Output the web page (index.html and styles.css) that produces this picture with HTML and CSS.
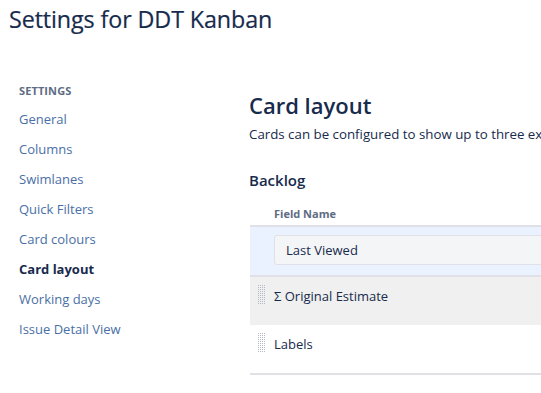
FILE: index.html
```html
<!DOCTYPE html>
<html>
<head>
<meta charset="utf-8">
<link rel="stylesheet" href="styles.css">
</head>
<body>
<header class="page-header">
  <h1 class="page-title">Settings for DDT Kanban</h1>
</header>
<div class="layout">
  <nav class="sidebar">
    <div class="nav-heading">SETTINGS</div>
    <ul class="nav-list">
      <li><a class="nav-link">General</a></li>
      <li><a class="nav-link">Columns</a></li>
      <li><a class="nav-link">Swimlanes</a></li>
      <li><a class="nav-link">Quick Filters</a></li>
      <li><a class="nav-link">Card colours</a></li>
      <li><a class="nav-link active">Card layout</a></li>
      <li><a class="nav-link">Working days</a></li>
      <li><a class="nav-link">Issue Detail View</a></li>
    </ul>
  </nav>
  <main class="content">
    <h2 class="section-title">Card layout</h2>
    <p class="section-desc">Cards can be configured to show up to three extra fields.</p>
    <h3 class="sub-title">Backlog</h3>
    <div class="table">
      <div class="table-head">Field Name</div>
      <div class="row row-add">
        <div class="field-input">Last Viewed</div>
      </div>
      <div class="row row-hover">
        <svg class="grip" width="7" height="20" viewBox="0 0 7 20">
          <defs><pattern id="dots1" width="2" height="2" patternUnits="userSpaceOnUse"><rect width="1" height="1" fill="#b3b9c4"/></pattern></defs>
          <rect width="7" height="20" fill="url(#dots1)"/>
        </svg>
        <span class="row-text">Σ Original Estimate</span>
      </div>
      <div class="row row-last">
        <svg class="grip" width="7" height="20" viewBox="0 0 7 20">
          <defs><pattern id="dots2" width="2" height="2" patternUnits="userSpaceOnUse"><rect width="1" height="1" fill="#b3b9c4"/></pattern></defs>
          <rect width="7" height="20" fill="url(#dots2)"/>
        </svg>
        <span class="row-text">Labels</span>
      </div>
    </div>
  </main>
</div>
</body>
</html>
```
FILE: styles.css
```css
* { box-sizing: border-box; }
html, body { margin: 0; padding: 0; background: #fff; }
body {
  font-family: "Open Sans", "Noto Sans", sans-serif;
  color: #172b4d;
  width: 541px;
  height: 393px;
  overflow: hidden;
}
.page-header { padding: 3px 0 0 9px; height: 70px; }
.page-title {
  margin: 0;
  font-size: 23.3px;
  font-weight: 400;
  line-height: 32px;
  color: #172b4d;
  letter-spacing: -0.1px;
  -webkit-text-stroke: 0.2px #172b4d;
}
.layout { display: flex; }
.sidebar { width: 249px; flex: none; padding: 13px 0 0 19px; }
.nav-heading {
  font-size: 11px;
  font-weight: 700;
  color: #5e6c84;
  line-height: 16px;
  letter-spacing: 0.1px;
}
.nav-list { list-style: none; margin: 4px 0 0; padding: 0; }
.nav-list li { height: 30px; line-height: 30px; }
.nav-link { font-size: 13px; color: #4a6fa5; text-decoration: none; }
.nav-link.active { color: #172b4d; font-weight: 700; }
.content { flex: 1; min-width: 0; padding-top: 20px; white-space: nowrap; overflow: hidden; }
.section-title {
  margin: 0;
  font-size: 22px;
  font-weight: 600;
  line-height: 30px;
  color: #172b4d;
}
.section-desc { margin: 4px 0 0; font-size: 13.3px; line-height: 20px; color: #172b4d; }
.sub-title {
  margin: 25px 0 0;
  font-size: 15px;
  font-weight: 600;
  line-height: 22px;
  color: #172b4d;
}
.table { margin: 15px -40px 0 1px; }
.table-head {
  font-size: 11px;
  font-weight: 700;
  color: #5e6c84;
  padding: 0 0 3px 24px;
  line-height: 16px;
  border-bottom: 2px solid #dfe1e6;
}
.row {
  height: 48px;
  display: flex;
  align-items: flex-start;
  padding: 8px 0 0 8px;
  font-size: 13px;
}
.row-add { background: #ebf2ff; height: 50px; padding: 8px 0 0 24px; border-bottom: 2px solid #dfe1e6; }
.row-hover { background: #f0f0f0; }
.row-last { height: 50px; border-bottom: 2px solid #dfe1e6; }
.field-input {
  flex: 1;
  height: 30px;
  line-height: 28px;
  padding-left: 11px;
  background: #f4f5f7;
  border: 1px solid #dfe1e6;
  border-radius: 3px;
  font-size: 13px;
  color: #172b4d;
}
.grip { flex: none; display: block; }
.row-text { margin-left: 9px; padding-top: 2px; line-height: 18px; color: #172b4d; }
```
